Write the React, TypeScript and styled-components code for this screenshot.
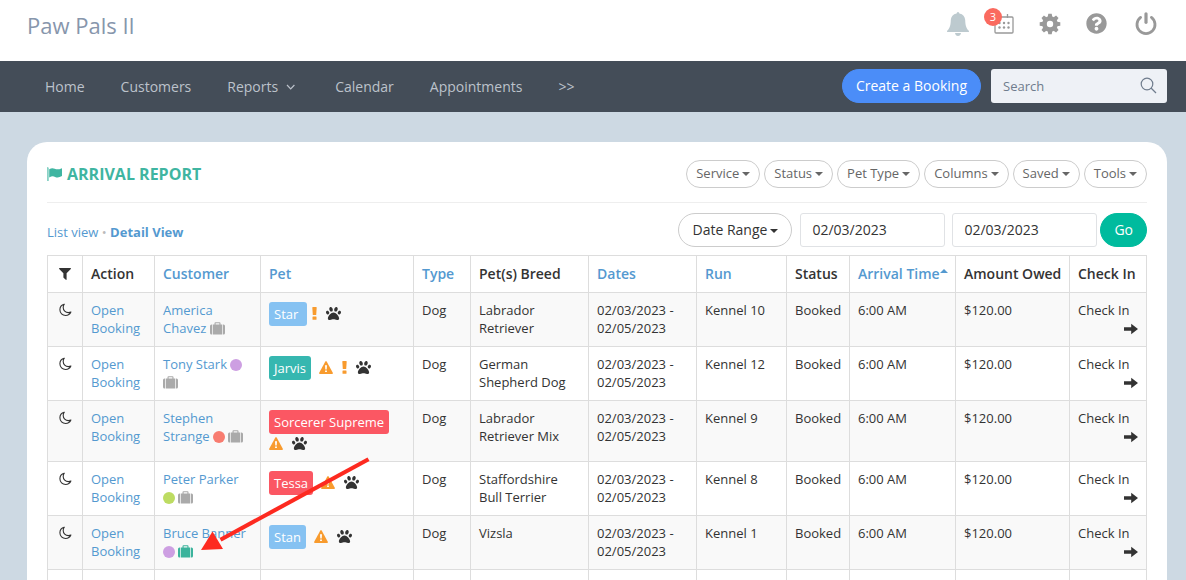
import React from 'react';
import styled, { createGlobalStyle, css } from 'styled-components';
import { FaPaw, FaQuestionCircle } from 'react-icons/fa';

const GlobalStyle = createGlobalStyle`
  *, *::before, *::after { box-sizing: border-box; }
  body {
    margin: 0;
    background: #cdd9e3;
    color: #333;
    font-family: 'Open Sans', 'Liberation Sans', sans-serif;
    font-size: 13px;
    line-height: 18px;
  }
  button, input { font: inherit; color: inherit; }
  a { color: #5499d0; text-decoration: none; }
  svg { display: block; }
`;

const TopBar = styled.header`
  display: flex;
  justify-content: space-between;
  padding: 8px 26px 0 27px;
  height: 61px;
  background: #fff;
`;

const Brand = styled.h1`
  margin: 0;
  font-size: 22px;
  font-weight: 400;
  line-height: 34px;
  color: #8796ac;
`;

const Tools = styled.div`
  display: flex;
  align-items: center;
  gap: 25px;
  height: 31px;
`;

const IconButton = styled.button`
  position: relative;
  display: flex;
  padding: 0;
  border: 0;
  background: none;
  color: #999;
`;

const Badge = styled.span`
  position: absolute;
  top: -6px;
  left: -10px;
  width: 18px;
  height: 18px;
  border-radius: 9px;
  background: #fa6a5f;
  color: #fff;
  font-size: 11px;
  line-height: 18px;
  text-align: center;
`;

const NavBar = styled.nav`
  display: flex;
  align-items: center;
  justify-content: space-between;
  padding: 0 19px 0 27px;
  height: 51px;
  background: #444d58;
`;

const NavLinks = styled.div`
  display: flex;
`;

const NavLink = styled.a`
  display: flex;
  align-items: center;
  gap: 8px;
  padding: 0 18px;
  font-size: 14px;
  line-height: 51px;
  color: #bcc2cb;
`;

const NavActions = styled.div`
  display: flex;
  gap: 10px;
  padding-bottom: 2px;
`;

const Pill = styled.button<{ $tone?: 'blue' | 'green' | 'small' }>`
  display: flex;
  align-items: center;
  gap: 3px;
  height: 34px;
  padding: 0 13px;
  border: 1px solid #ccc;
  border-radius: 17px;
  background: #fff;
  font-size: 14px;
  white-space: nowrap;
  ${p => p.$tone === 'blue' && css`background: #4b8df8; border-color: #4b8df8; color: #fff; font-weight: 500;`}
  ${p => p.$tone === 'green' && css`background: #00bb9e; border-color: #00bb9e; color: #fff; font-weight: 500;`}
  ${p => p.$tone === 'small' && css`height: 28px; padding: 0 9px 2px; font-size: 13px; color: #666;`}
`;

const Caret = styled.span`
  margin-top: 2px;
  border: 4px solid transparent;
  border-top-color: currentColor;
  border-bottom: 0;
`;

const SearchBox = styled.label`
  display: flex;
  align-items: center;
  width: 176px;
  height: 34px;
  padding: 0 10px 0 12px;
  border-radius: 3px;
  background: #eef1f6;
  color: #6f7c8d;
`;

const SearchInput = styled.input`
  flex: 1;
  min-width: 0;
  padding: 0;
  border: 0;
  outline: 0;
  background: none;
  &::placeholder { color: #6f7c8d; opacity: 1; }
`;

const Card = styled.main`
  margin: 30px 19px 0 27px;
  padding: 18px 20px 20px;
  border-radius: 20px 20px 0 0;
  background: #fff;
`;

const CardHead = styled.div`
  display: flex;
  align-items: center;
  justify-content: space-between;
  padding-bottom: 14px;
  border-bottom: 1px solid #eee;
`;

const Title = styled.h2`
  display: flex;
  align-items: center;
  gap: 5px;
  margin: 0;
  font-size: 16px;
  font-weight: 700;
  line-height: 28px;
  color: #3fb5a1;
`;

const Filters = styled.div`
  display: flex;
  gap: 4px;
`;

const ViewRow = styled.div`
  display: flex;
  align-items: center;
  justify-content: space-between;
  padding: 10px 0 8px;
`;

const Views = styled.div`
  padding-top: 4px;
  color: #bbb;
`;

const DateForm = styled.form`
  display: flex;
  gap: 3px;
`;

const Dates = styled.div`
  display: flex;
  gap: 7px;
  margin-left: 5px;
`;

const DateInput = styled.input`
  width: 145px;
  height: 34px;
  padding: 0 11px 2px;
  border: 1px solid #e0e2e5;
  border-radius: 3px;
  font-size: 14px;
`;

const TableArea = styled.div`
  position: relative;
`;

const Pointer = styled.svg`
  position: absolute;
  top: 200px;
  left: 150px;
  pointer-events: none;
`;

const Table = styled.table`
  width: 100%;
  table-layout: fixed;
  border-collapse: collapse;
  th, td { border: 1px solid #ddd; }
  tbody tr:nth-child(odd) { background: #f9f9f9; }
`;

const Th = styled.th`
  height: 37px;
  padding: 8px;
  font-size: 14px;
  font-weight: 600;
  line-height: 20px;
  text-align: left;
  white-space: nowrap;
`;

const Td = styled.td`
  height: 54px;
  padding: 8px;
  vertical-align: top;
`;

const CenterIcon = styled.span<{ $drop?: number }>`
  display: flex;
  justify-content: center;
  padding-top: ${p => p.$drop ?? 0}px;
`;

const SortUp = styled.span`
  display: inline-block;
  vertical-align: 6px;
  border: 4px solid transparent;
  border-bottom-color: currentColor;
  border-top: 0;
`;

const Dot = styled.span<{ $color: string }>`
  display: inline-block;
  width: 12px;
  height: 12px;
  border-radius: 6px;
  vertical-align: -2px;
  background: ${p => p.$color};
`;

const BagWrap = styled.span<{ $active?: boolean }>`
  display: inline-block;
  vertical-align: -2px;
  color: ${p => (p.$active ? '#3bb39c' : '#aaa')};
`;

const Pets = styled.div`
  display: flex;
  flex-wrap: wrap;
  align-items: center;
  padding-top: 1px;
`;

const Tag = styled.span<{ $color: string; $tight?: boolean }>`
  margin-right: ${p => (p.$tight ? 5 : 8)}px;
  padding: 0 5px;
  border-radius: 3px;
  background: ${p => p.$color};
  color: #fff;
  line-height: 24px;
  white-space: pre;
`;

const Mark = styled.span`
  display: flex;
  align-items: center;
  height: 19px;
  margin-right: 9px;
  padding-bottom: 1px;
  color: #f89b2e;
`;

const PawMark = styled(Mark)`
  margin-right: 0;
  color: #333;
`;

const CheckArrow = styled.span`
  display: flex;
  align-items: center;
  justify-content: flex-end;
  height: 19px;
`;

const Bag = ({ active }: { active?: boolean }) => (
  <BagWrap $active={active}>
    <svg width="15" height="13" viewBox="0 0 15 13" fill="currentColor">
      <path d="M2 2.500v10H1.500A1.500 1.500 0 0 1 0 11V4a1.500 1.500 0 0 1 1.500-1.500zM13 2.500h.5A1.500 1.500 0 0 1 15 4v7a1.500 1.500 0 0 1-1.500 1.500H13zM2.700 2.500h1.800V1.200Q4.500.2 5.500.2h4q1 0 1 1v1.300h1.800v10H2.700zM5.600 2.500h3.800V1.300H5.600z" />
    </svg>
  </BagWrap>
);

const Moon = () => (
  <svg width="13" height="14" viewBox="0 0 13 14" fill="none" stroke="#333" strokeWidth="1.100" strokeLinejoin="round">
    <path d="M5.300 1.200C2.600 1.800.9 4.100.9 6.800c0 3.200 2.500 5.700 5.700 5.700 2.400 0 4.400-1.400 5.300-3.400-.8.400-1.600.5-2.400.5-3.100 0-5.300-2.300-5.300-5.200 0-1.200.4-2.300 1.100-3.200z" />
  </svg>
);

const Warning = () => (
  <Mark>
    <svg width="14" height="13" viewBox="0 0 14 13">
      <path d="M6.200.7q.8-1.200 1.600 0l6 11q.5 1.200-.8 1.300H1Q-.3 12.900.2 11.700z" fill="currentColor" />
      <path d="M6 4.200h2l-.3 4.300H6.300zM6.100 9.400h1.800v1.700H6.100z" fill="#fff" />
    </svg>
  </Mark>
);

const Bang = () => (
  <Mark>
    <svg width="5" height="13" viewBox="0 0 5 13" fill="currentColor">
      <path d="M.9 0h3.200q.6 0 .6.600L4.200 8H.8L.3.600Q.3 0 .9 0zM1 9.400h3q.5 0 .5.500v2.300q0 .5-.5.500H1q-.5 0-.5-.5V9.900q0-.5.500-.5z" />
    </svg>
  </Mark>
);

const Arrow = () => (
  <svg width="14" height="12" viewBox="0 0 14 12" fill="#333">
    <path d="M0 4.300h7.200V.7L14 6l-6.800 5.300V7.700H0z" />
  </svg>
);

type Booking = {
  customer: string;
  dot?: string;
  active?: boolean;
  pet: string;
  petColor: string;
  warn?: boolean;
  bang?: boolean;
  breed: string;
  run: string;
};

const bookings: Booking[] = [
  { customer: 'America Chavez', pet: 'Star ', petColor: '#86c2f2', bang: true, breed: 'Labrador Retriever', run: 'Kennel 10' },
  { customer: 'Tony Stark', dot: '#cd9fe2', pet: 'Jarvis', petColor: '#36b7b0', warn: true, bang: true, breed: 'German Shepherd Dog', run: 'Kennel 12' },
  { customer: 'Stephen Strange', dot: '#f87c70', pet: 'Sorcerer Supreme', petColor: '#fb5763', warn: true, breed: 'Labrador Retriever Mix', run: 'Kennel 9' },
  { customer: 'Peter Parker', dot: '#bddc62', pet: 'Tessa', petColor: '#fb5763', warn: true, breed: 'Staffordshire Bull Terrier', run: 'Kennel 8' },
  { customer: 'Bruce Banner', dot: '#cd9fe2', active: true, pet: 'Stan', petColor: '#86c2f2', warn: true, breed: 'Vizsla', run: 'Kennel 1' },
];

const columnWidths = [35, 72, 106, 153, 57, 118, 108, 90, 63, 106, 114, 77];
const filters = ['Service', 'Status', 'Pet Type', 'Columns', 'Saved', 'Tools'];

export default function App() {
  return (
    <>
      <GlobalStyle />
      <TopBar>
        <Brand>Paw Pals II</Brand>
        <Tools>
          <IconButton aria-label="Notifications">
            <svg width="22" height="24" viewBox="0 0 22 24" fill="#bdcacf">
              <path d="M11 0q1.300 0 1.400 1.500c3.600.7 5.600 3.200 5.800 6.500.2 4.500.6 8 3.600 10.700.5.500.1 1.300-.6 1.300H.8c-.7 0-1.100-.8-.6-1.300C3.200 16 3.600 12.500 3.800 8c.2-3.300 2.200-5.800 5.800-6.500Q9.700 0 11 0zM8 21h6q-.5 3-3 3t-3-3z" />
            </svg>
          </IconButton>
          <IconButton aria-label="Calendar alerts">
            <svg width="20" height="20" viewBox="0 0 20 20" fill="none" stroke="#999" strokeWidth="1.300">
              <rect x="1" y="3" width="18" height="16" rx="1" />
              <path d="M5.500 0v4M13.500 0v4" />
              <g fill="#999" stroke="none">
                {[9, 13.500].map(y => [5.500, 10, 14.500].map(x => <circle key={`${x}-${y}`} cx={x} cy={y} r="1.200" />))}
              </g>
            </svg>
            <Badge>3</Badge>
          </IconButton>
          <IconButton aria-label="Settings">
            <svg width="22" height="22" viewBox="0 0 22 22">
              <g fill="#999">
                {[0, 45, 90, 135].map(a => (
                  <path key={a} d="M9.300.7h3.400l.6 3.300v14l-.6 3.300H9.300L8.700 18V4z" transform={`rotate(${a} 11 11)`} />
                ))}
                <circle cx="11" cy="11" r="7.800" />
              </g>
              <circle cx="11" cy="11" r="3.200" fill="#fff" />
            </svg>
          </IconButton>
          <IconButton aria-label="Help"><FaQuestionCircle size={21} /></IconButton>
          <IconButton aria-label="Log out">
            <svg width="28" height="24" viewBox="0 0 28 24" fill="none" stroke="#999" strokeWidth="2.800" strokeLinecap="round">
              <path d="M14 1.800v8.500" strokeWidth="3.200" />
              <path d="M8.600 5.400a9 9 0 1 0 10.800 0" />
            </svg>
          </IconButton>
        </Tools>
      </TopBar>
      <NavBar>
        <NavLinks>
          <NavLink href="#home">Home</NavLink>
          <NavLink href="#customers">Customers</NavLink>
          <NavLink href="#reports">
            Reports
            <svg width="13" height="6" viewBox="0 0 13 6" fill="none" stroke="currentColor" strokeWidth="1.200"><path d="M1 1l3.700 3.800L8.400 1" /></svg>
          </NavLink>
          <NavLink href="#calendar">Calendar</NavLink>
          <NavLink href="#appointments">Appointments</NavLink>
          <NavLink href="#more">&gt;&gt;</NavLink>
        </NavLinks>
        <NavActions>
          <Pill $tone="blue">Create a Booking</Pill>
          <SearchBox>
            <SearchInput type="text" placeholder="Search" aria-label="Search" />
            <svg width="17" height="17" viewBox="0 0 17 17" fill="none" stroke="currentColor" strokeWidth="1.200">
              <circle cx="7" cy="7" r="5.800" /><path d="M11 11l5 5" />
            </svg>
          </SearchBox>
        </NavActions>
      </NavBar>
      <Card>
        <CardHead>
          <Title>
            <svg width="15" height="14" viewBox="0 0 15 14" fill="currentColor">
              <path d="M0 .8a.8.800 0 0 1 1.500 0V14H.4V1.300A.8.800 0 0 1 0 .8zM2.200 2.200C4.500.8 6 1 7.700 1.700c2 .9 3.800 1 7.300-.5v7.900c-2.700 1.500-4.800 1.700-6.900.8-1.800-.8-3.500-.8-5.900.5z" />
            </svg>
            ARRIVAL REPORT
          </Title>
          <Filters>
            {filters.map(f => <Pill key={f} $tone="small">{f}<Caret /></Pill>)}
          </Filters>
        </CardHead>
        <ViewRow>
          <Views><a href="#list">List view</a> • <a href="#detail"><b>Detail View</b></a></Views>
          <DateForm onSubmit={e => e.preventDefault()}>
            <Pill type="button">Date Range<Caret /></Pill>
            <Dates>
              <DateInput aria-label="Start date" defaultValue="02/03/2023" />
              <DateInput aria-label="End date" defaultValue="02/03/2023" />
            </Dates>
            <Pill $tone="green" type="submit">Go</Pill>
          </DateForm>
        </ViewRow>
        <TableArea>
          <Table>
            <colgroup>{columnWidths.map((w, i) => <col key={i} style={{ width: w }} />)}</colgroup>
            <thead>
              <tr>
                <Th aria-label="Filter">
                  <CenterIcon>
                    <svg width="12" height="12" viewBox="0 0 12 12" fill="#333"><path d="M.6 0h10.800q.9.200.4 1L7.600 5.300V11.500q-.2.700-.8.300L4.600 9.800q-.2-.2-.2-.5v-4L.2 1Q-.3.200.6 0z" /></svg>
                  </CenterIcon>
                </Th>
                <Th>Action</Th>
                <Th><a href="#customer">Customer</a></Th>
                <Th><a href="#pet">Pet</a></Th>
                <Th><a href="#type">Type</a></Th>
                <Th>Pet(s) Breed</Th>
                <Th><a href="#dates">Dates</a></Th>
                <Th><a href="#run">Run</a></Th>
                <Th>Status</Th>
                <Th><a href="#arrival">Arrival Time<SortUp /></a></Th>
                <Th>Amount Owed</Th>
                <Th>Check In</Th>
              </tr>
            </thead>
            <tbody>
              {bookings.map(b => (
                <tr key={b.customer}>
                  <Td><CenterIcon $drop={2}><Moon /></CenterIcon></Td>
                  <Td><a href="#booking">Open Booking</a></Td>
                  <Td>
                    <a href="#profile">{b.customer}</a>{' '}
                    {b.dot && <><Dot $color={b.dot} />{' '}</>}
                    <Bag active={b.active} />
                  </Td>
                  <Td>
                    <Pets>
                      <Tag $color={b.petColor} $tight={!b.warn}>{b.pet}</Tag>
                      {b.warn && <Warning />}
                      {b.bang && <Bang />}
                      <PawMark><FaPaw size={15} /></PawMark>
                    </Pets>
                  </Td>
                  <Td>Dog</Td>
                  <Td>{b.breed}</Td>
                  <Td>02/03/2023 - 02/05/2023</Td>
                  <Td>{b.run}</Td>
                  <Td>Booked</Td>
                  <Td>6:00 AM</Td>
                  <Td>$120.00</Td>
                  <Td>Check In<CheckArrow><Arrow /></CheckArrow></Td>
                </tr>
              ))}
              <tr>{columnWidths.map((_, i) => <Td key={i} />)}</tr>
            </tbody>
          </Table>
          <Pointer width="176" height="100" viewBox="0 0 176 100" fill="#fd2a20">
            <path d="M170.500 2.500l2 3.600L24.500 86.500l-2-3.600z" />
            <path d="M4 95L15.500 76.500 26 94z" />
          </Pointer>
        </TableArea>
      </Card>
    </>
  );
}
